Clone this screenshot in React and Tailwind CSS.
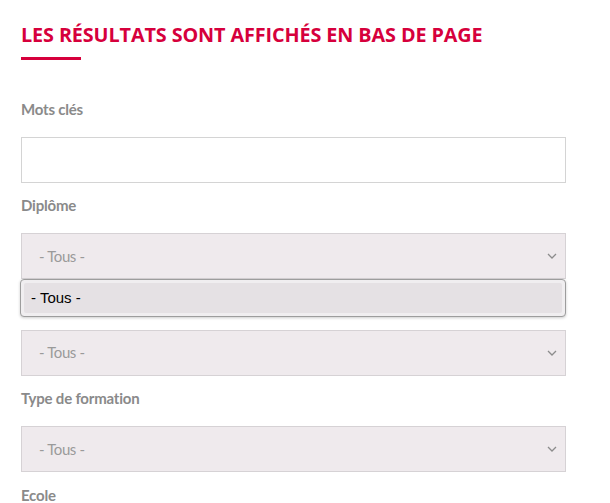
import React from 'react';

const Chevron = () => (
  <svg width="10" height="6" viewBox="0 0 10 6" fill="none" className="shrink-0">
    <path d="M1 1l4 4 4-4" stroke="#8c8c8c" strokeWidth="1.3" />
  </svg>
);

const Label = ({ children }) => (
  <div className="h-[20px] leading-[20px] mb-[18px] text-[15px] font-bold text-[#8a8a8a] font-['Lato',sans-serif] tracking-[-0.2px]">
    {children}
  </div>
);

const FakeSelect = () => (
  <div className="h-[46px] mb-[12.5px] flex items-center justify-between pl-[17px] pr-[8px] bg-[#efeaed] border border-[#d6d2d5] text-[15px] tracking-[-0.4px] text-[#9a9a9a] font-['Lato',sans-serif]">
    <span>- Tous -</span>
    <Chevron />
  </div>
);

export default function App() {
  return (
    <div className="w-[610px] h-[503px] overflow-hidden bg-white px-[21px] pt-[22px]">
      <div className="w-[545px]">
        <h2 className="text-[19.8px] leading-[26px] font-bold text-[#d6003c] font-['Open_Sans',sans-serif] tracking-[-0.1px]">
          LES RÉSULTATS SONT AFFICHÉS EN BAS DE PAGE
        </h2>
        <div className="mt-[9px] w-[60px] h-[3px] bg-[#d6003c]" />

        <div className="mt-[38.5px]">
          <Label>Mots clés</Label>
          <div className="h-[46px] mb-[12.5px] border border-[#d4d4d4] bg-white" />

          <Label>Diplôme</Label>
          <div className="relative z-10">
            <FakeSelect />
            {/* open dropdown list, covers the next label */}
            <div className="absolute left-[-1px] right-0 top-[46px] h-[38px] rounded-[4px] border border-[#9d9d9d] bg-[#f0eef0] shadow-[0_1px_3px_rgba(0,0,0,0.2)] p-[3px]">
              <div className="h-full rounded-[2px] bg-[#e5e1e4] flex items-center pl-[7px] text-[15px] text-black font-['Liberation_Sans',sans-serif]">
                - Tous -
              </div>
            </div>
          </div>

          <div className="h-[20px] mb-[18px]" />
          <FakeSelect />

          <Label>Type de formation</Label>
          <FakeSelect />

          <Label>Ecole</Label>
        </div>
      </div>
    </div>
  );
}
